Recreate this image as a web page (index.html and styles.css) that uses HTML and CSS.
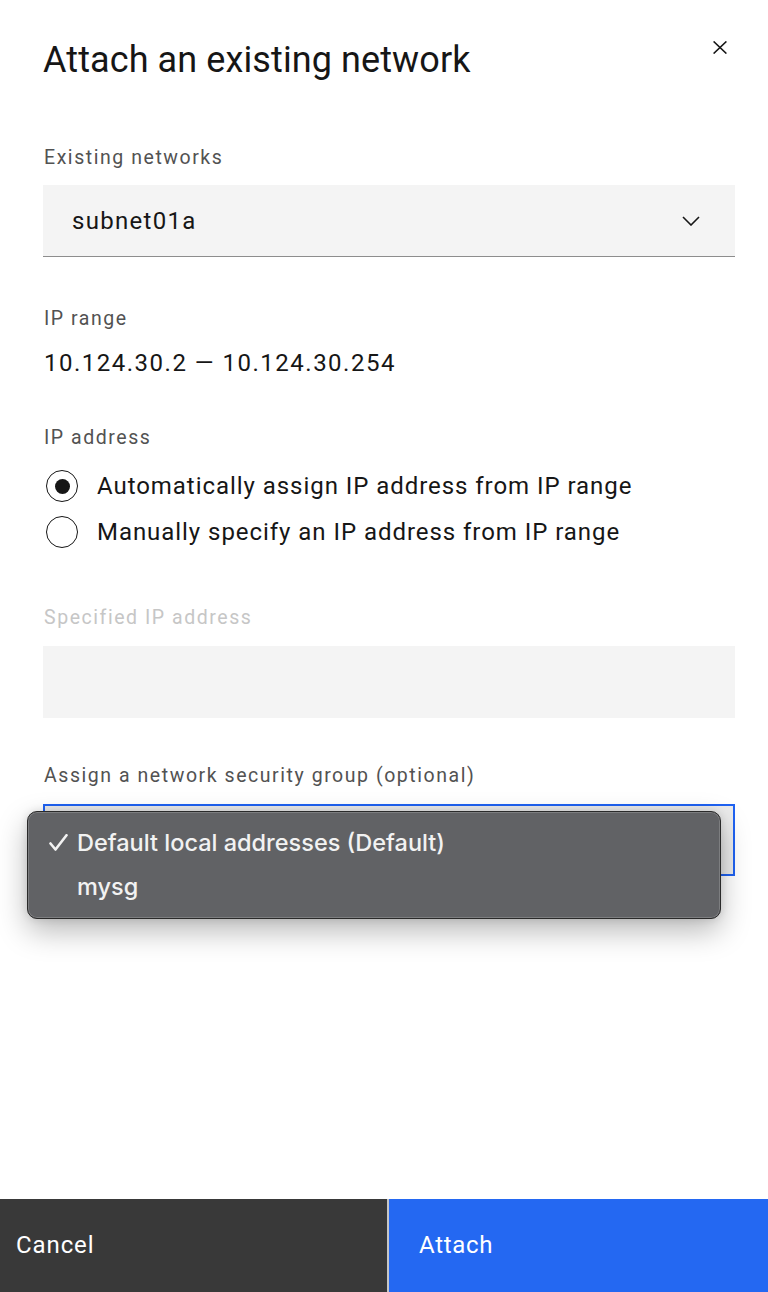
FILE: index.html
```html
<!DOCTYPE html>
<html lang="en">
<head>
<meta charset="utf-8">
<title>Attach an existing network</title>
<link rel="stylesheet" href="styles.css">
</head>
<body>
<div class="modal">
  <header class="header">
    <h1 class="title">Attach an existing network</h1>
    <button class="close" aria-label="Close">
      <svg width="14" height="13" viewBox="0 0 14 13"><path d="M0.6 0.4L13.4 12.6M13.4 0.4L0.6 12.6" stroke="#161616" stroke-width="1.5" fill="none"/></svg>
    </button>
  </header>

  <div class="content">
    <label class="label l-networks">Existing networks</label>
    <div class="select">
      <span class="select-value">subnet01a</span>
      <svg class="chevron" width="18" height="10" viewBox="0 0 18 10"><polyline points="1,1 9,9 17,1" stroke="#161616" stroke-width="1.6" fill="none"/></svg>
    </div>

    <div class="label l-range">IP range</div>
    <div class="value">10.124.30.2 — 10.124.30.254</div>

    <div class="label l-address">IP address</div>
    <div class="radios">
      <div class="radio-row"><span class="radio checked"></span><span class="radio-text">Automatically assign IP address from IP range</span></div>
      <div class="radio-row"><span class="radio"></span><span class="radio-text">Manually specify an IP address from IP range</span></div>
    </div>

    <div class="label disabled l-specified">Specified IP address</div>
    <div class="input-disabled"></div>

    <div class="label l-sg">Assign a network security group (optional)</div>
    <div class="sg-wrap">
      <div class="select focused"></div>
      <div class="popup">
        <div class="opt">
          <span class="check"><svg width="19" height="17" viewBox="0 0 19 17"><path d="M1.5 9.5L6.5 15.5L17.5 1.2" stroke="#f2f2f2" stroke-width="2.6" fill="none" stroke-linecap="round" stroke-linejoin="round"/></svg></span>
          <span>Default local addresses (Default)</span>
        </div>
        <div class="opt"><span class="check"></span><span>mysg</span></div>
      </div>
    </div>
  </div>

  <footer class="footer">
    <button class="btn btn-secondary">Cancel</button>
    <button class="btn btn-primary">Attach</button>
  </footer>
</div>
</body>
</html>
```

FILE: styles.css
```css
* { box-sizing: border-box; }
html, body { margin: 0; padding: 0; background: #ffffff; }
body {
  font-family: Roboto, "Noto Sans", sans-serif;
  color: #161616;
}
.modal {
  min-height: 1292px;
  display: flex;
  flex-direction: column;
}
.header {
  display: flex;
  justify-content: space-between;
  align-items: flex-start;
  padding: 38px 33px 0 43px;
}
.title {
  margin: 0;
  font-size: 36px;
  line-height: 44px;
  font-weight: 400;
  letter-spacing: 0.1px;
}
.close {
  border: 0;
  background: transparent;
  padding: 0;
  margin: 3px 8px 0 0;
  width: 14px;
  height: 13px;
  display: flex;
}
.content {
  padding: 0 33px 0 43px;
  display: flex;
  flex-direction: column;
}
.label {
  font-size: 19.5px;
  line-height: 24px;
  color: #525252;
  letter-spacing: 1.55px;
  padding-left: 1px;
}
.label.disabled { color: #c6c6c6; }
.l-networks { margin-top: 64px; }
.select {
  margin-top: 15px;
  height: 72px;
  background: #f4f4f4;
  border-bottom: 1px solid #8d8d8d;
  display: flex;
  align-items: center;
  justify-content: space-between;
  padding: 0 35px 0 29px;
}
.select-value { font-size: 24px; letter-spacing: 1.3px; }
.l-range { margin-top: 50px; }
.value { margin-top: 17px; font-size: 24px; line-height: 30px; letter-spacing: 1.5px; padding-left: 1px; }
.l-address { margin-top: 48px; }
.radios { margin-top: 13px; display: flex; flex-direction: column; }
.radio-row {
  height: 46px;
  display: flex;
  align-items: center;
  gap: 19px;
  padding-left: 3px;
}
.radio {
  width: 32px;
  height: 32px;
  border-radius: 50%;
  border: 1.5px solid #161616;
  display: flex;
  align-items: center;
  justify-content: center;
  flex: none;
}
.radio.checked::after {
  content: "";
  width: 15px;
  height: 15px;
  border-radius: 50%;
  background: #161616;
}
.radio-text { font-size: 24px; letter-spacing: 0.95px; }
.l-specified { margin-top: 51px; }
.input-disabled {
  margin-top: 16px;
  height: 72px;
  background: #f4f4f4;
}
.l-sg { margin-top: 46px; }
.sg-wrap { position: relative; margin-top: 16px; }
.select.focused {
  margin-top: 0;
  background: #ebebeb;
  border: 2px solid #1f62f2;
  height: 72px;
}
.popup {
  position: absolute;
  left: -16px;
  top: 7px;
  width: 694px;
  height: 108px;
  border-radius: 10px;
  background: #616265;
  border: 1px solid #2a2a2a;
  box-shadow: inset 0 0 0 1px rgba(255,255,255,0.18), 0 12px 30px rgba(0,0,0,0.28), 0 0 8px rgba(0,0,0,0.12);
  padding-top: 8px;
  font-family: Inter, "Liberation Sans", sans-serif;
  color: #f2f2f2;
  font-weight: 500;
}
.opt {
  height: 44px;
  display: flex;
  align-items: center;
  font-size: 23.5px;
}
.check {
  width: 49px;
  padding-left: 21px;
  display: flex;
  align-items: center;
}
.footer {
  margin-top: auto;
  height: 93px;
  display: flex;
  background: #c6c6c6;
  gap: 2px;
}
.btn {
  flex: 1;
  border: 0;
  font-family: Roboto, "Noto Sans", sans-serif;
  font-size: 24px;
  color: #ffffff;
  text-align: left;
  display: flex;
  align-items: center;
  padding: 0 0 2px 16px;
  letter-spacing: 0.9px;
}
.btn-secondary { background: #393939; flex: 0 0 387px; }
.btn-primary { background: #2468f2; padding-left: 30px; letter-spacing: 0.7px; }
```
